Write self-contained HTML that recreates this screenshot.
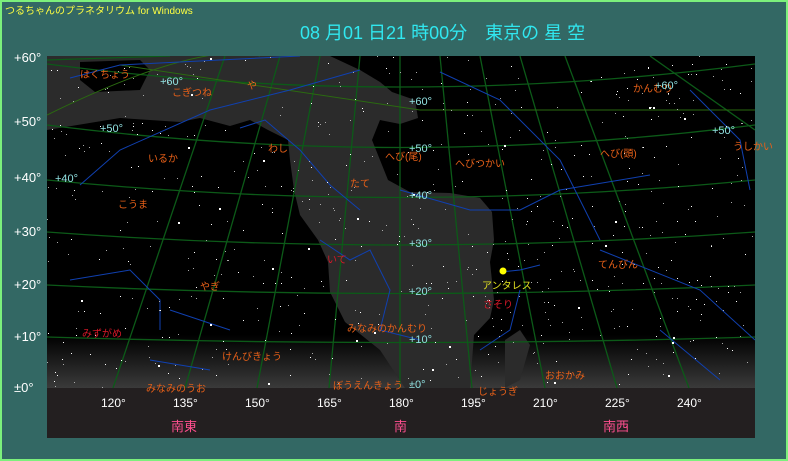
<!DOCTYPE html>
<html><head><meta charset="utf-8"><style>
html,body{margin:0;padding:0;}
body{width:788px;height:461px;overflow:hidden;background:#336864;position:relative;font-family:"Liberation Sans","Noto Sans CJK JP",sans-serif;}
#frame{position:absolute;left:0;top:0;width:784px;height:457px;border:2px solid #7cf07c;}
.t{position:absolute;white-space:nowrap;}
</style></head><body>
<div id="frame"></div>
<div class="t" style="left:5px;top:2px;font-size:10px;color:#ffff40;">つるちゃんのプラネタリウム for Windows</div>
<div class="t" style="left:300px;top:19px;font-size:18px;color:#30e8f0;">08 月01 日21 時00分　東京の 星 空</div>
<div class="t" style="left:14px;top:50px;font-size:13px;color:#fff;">+60°</div>
<div class="t" style="left:14px;top:114px;font-size:13px;color:#fff;">+50°</div>
<div class="t" style="left:14px;top:170px;font-size:13px;color:#fff;">+40°</div>
<div class="t" style="left:14px;top:224px;font-size:13px;color:#fff;">+30°</div>
<div class="t" style="left:14px;top:277px;font-size:13px;color:#fff;">+20°</div>
<div class="t" style="left:14px;top:329px;font-size:13px;color:#fff;">+10°</div>
<div class="t" style="left:14px;top:380px;font-size:13px;color:#fff;">±0°</div>
<svg style="position:absolute;left:47px;top:56px" width="708" height="382" viewBox="47 56 708 382">
<defs><linearGradient id="hz" x1="0" y1="0" x2="0" y2="1"><stop offset="0" stop-color="#000"/><stop offset="1" stop-color="#3a3a3a"/></linearGradient></defs>
<rect x="47" y="56" width="708" height="332" fill="#000"/>
<rect x="47" y="335" width="708" height="53" fill="url(#hz)"/>
<g fill="#2b2b2b">
<path d="M47,56 L330,56 L360,70 L380,82 L392,92 L415,100 L418,118 L400,124 L380,120 L372,140 L388,180 L410,192 L450,193 L480,198 L492,212 L494,240 L490,262 L494,300 L490,318 L474,335 L470,388 L405,388 L380,350 L345,322 L330,292 L328,262 L318,240 L300,215 L294,190 L290,160 L288,140 L268,130 L250,120 L230,126 L200,118 L180,122 L120,118 L47,130 Z"/>
<path d="M80,62 L140,60 L150,70 L140,90 L95,92 L80,80 Z" fill="#000"/>
<path d="M505,340 L520,330 L530,345 L520,380 L505,388 Z"/>
</g>
<g fill="none" stroke="#0c5a18" stroke-width="1.3">
<path d="M47,64 Q400,110 755,64"/>
<path d="M47,125 Q400,170 755,125"/>
<path d="M47,180 Q400,215 755,180"/>
<path d="M47,232 Q400,258 755,232"/>
<path d="M47,285 Q400,302 755,285"/>
<path d="M47,337 Q400,348 755,337"/>
<path d="M400,56 V388"/>
<path d="M113,388 L225,56"/><path d="M185,388 L280,56"/><path d="M257,388 L320,56"/><path d="M329,388 L360,56"/>
<path d="M472,388 L440,56"/><path d="M545,388 L480,56"/><path d="M617,388 L520,56"/><path d="M689,388 L565,56"/>
<path d="M47,60 L170,56"/><path d="M755,130 L650,56"/>
</g>
<g fill="none" stroke="#2a6a10" stroke-width="1"><path d="M47,115 Q200,40 260,56"/><path d="M120,65 L420,110 L755,110"/></g>
<g fill="none" stroke="#1040b0" stroke-width="1">
<path d="M70,78 L120,65 L300,56"/><path d="M80,185 L120,150 L210,110 L290,90 L360,70"/>
<path d="M240,128 L265,120 L300,150 L330,185 L360,210"/>
<path d="M440,72 L500,100 L560,160 L600,240"/><path d="M400,190 L470,210 L520,210 L560,190 L650,175"/>
<path d="M500,272 L520,270 L540,265"/><path d="M320,240 L350,260 L370,250 L390,290 L380,330 L420,340"/>
<path d="M70,280 L130,270 L160,300 L160,330"/><path d="M170,310 L200,320 L230,330"/>
<path d="M600,250 L700,290 L755,340"/><path d="M660,330 L720,380"/><path d="M150,360 L210,370"/>
<path d="M690,90 L740,140 L750,190"/><path d="M520,290 L510,330 L480,350"/>
</g>
<g id="stars" fill="#fff"></g>
<circle cx="503" cy="271" r="3.5" fill="#ffff00"/>
<rect x="47" y="388" width="708" height="50" fill="#231f20"/>
</svg>
<script>
(function(){var g=document.getElementById('stars'),s=7,h='';function r(){s=(s*16807)%2147483647;return s/2147483647;}
for(var i=0;i<650;i++){var x=47+r()*708,y=56+r()*332,b=r();h+='<rect x="'+x.toFixed(0)+'" y="'+y.toFixed(0)+'" width="'+(b>0.95?2:1)+'" height="'+(b>0.95?2:1)+'" fill="'+(b>0.6?'#fff':'#aaa')+'"/>';}
g.innerHTML=h;})();
</script>
<div style="position:absolute;font-size:10px;color:#e86018;">
<span class="t" style="left:80px;top:66px;">はくちょう</span>
<span class="t" style="left:172px;top:84px;">こぎつね</span>
<span class="t" style="left:247px;top:77px;">や</span>
<span class="t" style="left:148px;top:150px;">いるか</span>
<span class="t" style="left:268px;top:140px;">わし</span>
<span class="t" style="left:350px;top:175px;">たて</span>
<span class="t" style="left:385px;top:148px;">へび(尾)</span>
<span class="t" style="left:455px;top:155px;">へびつかい</span>
<span class="t" style="left:600px;top:145px;">へび(頭)</span>
<span class="t" style="left:633px;top:80px;">かんむり</span>
<span class="t" style="left:733px;top:138px;">うしかい</span>
<span class="t" style="left:118px;top:196px;">こうま</span>
<span class="t" style="left:200px;top:278px;">やぎ</span>
<span class="t" style="left:598px;top:256px;">てんびん</span>
<span class="t" style="left:347px;top:320px;">みなみのかんむり</span>
<span class="t" style="left:222px;top:348px;">けんびきょう</span>
<span class="t" style="left:146px;top:380px;">みなみのうお</span>
<span class="t" style="left:333px;top:377px;">ぼうえんきょう</span>
<span class="t" style="left:545px;top:367px;">おおかみ</span>
<span class="t" style="left:478px;top:383px;">じょうぎ</span>
</div>
<div style="position:absolute;font-size:10px;color:#d81828;">
<span class="t" style="left:82px;top:325px;">みずがめ</span>
<span class="t" style="left:327px;top:251px;">いて</span>
<span class="t" style="left:483px;top:296px;">さそり</span>
</div>
<div class="t" style="left:482px;top:277px;font-size:10px;color:#e0e020;">アンタレス</div>
<div style="position:absolute;font-size:11px;color:#90e0e0;">
<span class="t" style="left:160px;top:76px;">+60°</span>
<span class="t" style="left:100px;top:123px;">+50°</span>
<span class="t" style="left:55px;top:173px;">+40°</span>
<span class="t" style="left:409px;top:96px;">+60°</span>
<span class="t" style="left:409px;top:143px;">+50°</span>
<span class="t" style="left:409px;top:190px;">+40°</span>
<span class="t" style="left:409px;top:238px;">+30°</span>
<span class="t" style="left:409px;top:286px;">+20°</span>
<span class="t" style="left:409px;top:334px;">+10°</span>
<span class="t" style="left:409px;top:379px;">±0°</span>
<span class="t" style="left:655px;top:80px;">+60°</span>
<span class="t" style="left:712px;top:125px;">+50°</span>
</div>
<div style="position:absolute;font-size:12px;color:#fff;">
<span class="t" style="left:101px;top:396px;">120°</span>
<span class="t" style="left:173px;top:396px;">135°</span>
<span class="t" style="left:245px;top:396px;">150°</span>
<span class="t" style="left:317px;top:396px;">165°</span>
<span class="t" style="left:389px;top:396px;">180°</span>
<span class="t" style="left:461px;top:396px;">195°</span>
<span class="t" style="left:533px;top:396px;">210°</span>
<span class="t" style="left:605px;top:396px;">225°</span>
<span class="t" style="left:677px;top:396px;">240°</span>
</div>
<div style="position:absolute;font-size:13px;color:#ff4f8f;">
<span class="t" style="left:171px;top:416px;">南東</span>
<span class="t" style="left:394px;top:416px;">南</span>
<span class="t" style="left:603px;top:416px;">南西</span>
</div>
</body></html>
